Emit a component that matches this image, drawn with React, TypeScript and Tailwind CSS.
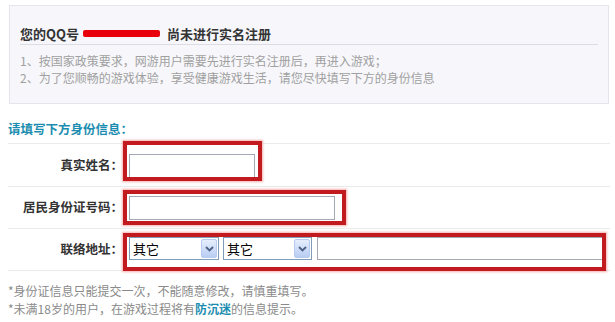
import React from "react";

const font = { fontFamily: '"SimSun","Noto Sans CJK SC","Liberation Sans",sans-serif' };

function FakeSelect({ w }: { w: string }) {
  return (
    <div className={`${w} h-[23px] flex items-stretch border border-[#7f9db9] bg-white`}>
      <div className="flex-1 flex items-center pl-[3px] text-[13px] text-black leading-none">其它</div>
      <div className="w-[16px] m-[1px] rounded-[2px] border border-[#b7cbef] bg-gradient-to-b from-[#e6eefc] to-[#b9cdf3] flex items-center justify-center">
        <svg width="9" height="6" viewBox="0 0 9 6">
          <path d="M1 1 L4.5 4.5 L8 1" fill="none" stroke="#4d6185" strokeWidth="1.8" />
        </svg>
      </div>
    </div>
  );
}

function RedBox({ cls }: { cls: string }) {
  return (
    <div
      className={`absolute ${cls} border-[4px] border-[#c11a1f] shadow-[0_0_2px_1px_rgba(240,120,120,0.6)] pointer-events-none`}
    />
  );
}

export default function App() {
  return (
    <div className="w-[615px] h-[322px] bg-white overflow-hidden relative" style={font}>
      <div className="ml-[9px] mt-[5px] w-[600px] h-[99px] border border-[#e4e4ec] bg-[#f7f7fb] px-[10px]">
        <div className="h-[39px] pt-[16px] flex items-center border-b border-[#dcdce4] text-[13px] font-bold text-[#333] leading-none">
          <span>您的QQ号</span>
          <span className="ml-[4px] w-[77px] h-[7px] bg-[#e8000b] rounded-[2px]" />
          <span className="ml-[7px]">尚未进行实名注册</span>
        </div>
        <div className="pt-[7px] text-[12px] text-[#a0a0a0] leading-[17px]">
          <div>1、按国家政策要求，网游用户需要先进行实名注册后，再进入游戏；</div>
          <div>2、为了您顺畅的游戏体验，享受健康游戏生活，请您尽快填写下方的身份信息</div>
        </div>
      </div>

      <div className="pl-[8px] mt-[16px] h-[17px] text-[12.5px] font-bold text-[#1c8db0] leading-[17px]">
        请填写下方身份信息：
      </div>

      <div className="mt-[6px] ml-[8px] w-[602px]">
        <div className="relative h-[43px] border-t border-[#ebebeb] flex items-center">
          <div className="w-[115px] text-right text-[12.5px] font-bold text-[#333]">真实姓名：</div>
          <div className="ml-[6px] mt-[1px] w-[126px] h-[24px] border border-[#a4a8b4] bg-white" />
          <RedBox cls="left-[115px] top-[-3px] w-[139px] h-[40px]" />
        </div>
        <div className="relative h-[42px] border-t border-[#ebebeb] flex items-center">
          <div className="w-[115px] text-right text-[12.5px] font-bold text-[#333]">居民身份证号码：</div>
          <div className="ml-[6px] w-[206px] h-[24px] border border-[#a4a8b4] bg-white" />
          <RedBox cls="left-[115px] top-[3px] w-[223px] h-[35px]" />
        </div>
        <div className="relative h-[43px] border-t border-b border-[#ebebeb] flex items-center">
          <div className="w-[115px] text-right text-[12.5px] font-bold text-[#333]">联络地址：</div>
          <div className="ml-[6px] -mt-[2px] flex items-center gap-[4px]">
            <FakeSelect w="w-[90px]" />
            <FakeSelect w="w-[89px]" />
            <div className="ml-[1px] w-[286px] h-[23px] border border-[#a4a8b4] bg-white" />
          </div>
          <RedBox cls="left-[115px] top-[4px] w-[483px] h-[38px]" />
        </div>
      </div>

      <div className="pl-[8px] mt-[11px] text-[12px] text-[#8a8a8a] leading-[18px]">
        <div>*身份证信息只能提交一次，不能随意修改，请慎重填写。</div>
        <div>
          *未满18岁的用户，在游戏过程将有<span className="font-bold text-[#1c8db0]">防沉迷</span>的信息提示。
        </div>
      </div>
    </div>
  );
}
